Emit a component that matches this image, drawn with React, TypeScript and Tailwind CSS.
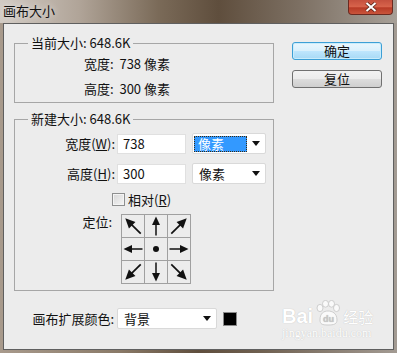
import React from "react";

const ARROWS: (number | null)[] = [-45, 0, 45, -90, null, 90, -135, 180, 135];

function Arrow({ angle }: { angle: number | null }) {
  const diag = angle !== null && angle % 90 !== 0;
  return (
    <svg width="22" height="22" viewBox="0 0 22 22">
      {angle === null ? (
        <circle cx="11" cy="11" r="3" fill="#111" />
      ) : (
        <g transform={`rotate(${angle} 11 11)${diag ? " translate(11 11) scale(1.15) translate(-11 -11)" : ""}`}>
          <line x1="11" y1="20.5" x2="11" y2="8" stroke="#111" strokeWidth="1.5" />
          <polygon points="7,10 15,10 11,1.5" fill="#111" />
        </g>
      )}
    </svg>
  );
}

function Caret() {
  return (
    <svg width="8" height="5" viewBox="0 0 8 5">
      <polygon points="0,0 8,0 4,5" fill="#111" />
    </svg>
  );
}

function Select({ value, className, active }: { value: string; className: string; active?: boolean }) {
  return (
    <div
      className={`flex h-[21px] items-center justify-between rounded-[2px] border border-[#d9d9d9] bg-white pr-[5px] ${className}`}
    >
      {active ? (
        <span className="ml-[1px] flex h-[16px] w-[53px] items-center border border-dotted border-[#3a2a10] bg-[#3399ff] pl-[3px] text-white">
          {value}
        </span>
      ) : (
        <span className="pl-[6px]">{value}</span>
      )}
      <Caret />
    </div>
  );
}

function Button({ label, focused }: { label: string; focused?: boolean }) {
  return (
    <div
      className={
        focused
          ? "flex h-[18px] w-[90px] items-center justify-center rounded-[3px] border border-[#3c9fd6] bg-[linear-gradient(#eaf6fd,#d9f0fc_50%,#bee6fd_51%,#a7d9f5)] shadow-[inset_0_0_0_1px_#c9ecfb]"
          : "flex h-[18px] w-[90px] items-center justify-center rounded-[3px] border border-[#707070] bg-[linear-gradient(#f2f2f2,#ebebeb_50%,#dddddd_51%,#cfcfcf)]"
      }
    >
      {label}
    </div>
  );
}

export default function App() {
  return (
    <div className="flex h-[353px] w-[397px] flex-col bg-[linear-gradient(90deg,#a89a8c,#8a7a68_30%,#5f4e3d_50%,#6e5f4f_65%,#a39b93_100%)] font-[family-name:Noto_Sans_CJK_SC,sans-serif] text-[13px] leading-[16px] text-[#111]">
      <div className="flex h-[23px] items-start justify-between bg-[linear-gradient(90deg,#d2cbc4,#b0a498_20%,#7a6a58_40%,#5f4e3d_55%,#7c6f62_75%,#a7a098_100%)]">
        <span className="pl-[3px] pt-[3px] text-[13px] [text-shadow:0_0_6px_#eee]">画布大小</span>
        <div className="mr-[4px] flex h-[15px] w-[45px] items-center justify-center rounded-b-[4px] border border-t-0 border-[#6b2a20] bg-[linear-gradient(#c4503e,#d8644c_50%,#b73a26_55%,#c9553c)]">
          <svg width="12" height="10" viewBox="0 0 12 10">
            <path d="M1.5 1 L10.5 9 M10.5 1 L1.5 9" stroke="#5a2418" strokeWidth="3.6" />
            <path d="M1.5 1 L10.5 9 M10.5 1 L1.5 9" stroke="#fff" strokeWidth="2" />
          </svg>
        </div>
      </div>

      <div className="relative mx-[3px] flex h-[327px] border border-[#5f5f5f] bg-[#ececec]">
        <div className="w-[270px] pl-[10px] pt-[11px]">
          <fieldset className="w-[260px] border border-[#a6a6a6] pb-[1px] pl-[13px]">
            <legend className="px-[3px]">当前大小: 648.6K</legend>
            <div className="pl-[56px]">
              <div className="flex h-[25px] items-center">宽度:&nbsp; 738 像素</div>
              <div className="flex h-[25px] items-center">高度:&nbsp; 300 像素</div>
            </div>
          </fieldset>

          <fieldset className="mt-[8px] w-[260px] border border-[#a6a6a6] pb-[6px] pl-[13px]">
            <legend className="px-[3px]">新建大小: 648.6K</legend>
            <div className="mt-[6px] flex h-[21px] items-center">
              <span className="w-[87px] text-right">
                宽度(<u>W</u>):
              </span>
              <div className="ml-[2px] flex h-[20px] w-[69px] items-center border border-[#e0e0e0] bg-white pl-[5px]">
                738
              </div>
              <Select className="ml-[6px] w-[74px]" value="像素" active />
            </div>
            <div className="mt-[9px] flex h-[21px] items-center">
              <span className="w-[87px] text-right">
                高度(<u>H</u>):
              </span>
              <div className="ml-[2px] flex h-[20px] w-[69px] items-center border border-[#e0e0e0] bg-white pl-[5px]">
                300
              </div>
              <Select className="ml-[6px] w-[74px]" value="像素" />
            </div>
            <div className="mt-[9px] flex h-[13px] items-center pl-[84px]">
              <div className="h-[13px] w-[13px] border border-[#8e8f8f] bg-[linear-gradient(135deg,#d6d6d6,#f6f6f6)] shadow-[inset_0_0_0_1px_#f4f4f4]" />
              <span className="ml-[3px]">
                相对(<u>R</u>)
              </span>
            </div>
            <div className="mt-[8px] flex items-start">
              <span className="w-[84px] text-right">定位:</span>
              <div className="ml-[9px] grid grid-cols-[22px_22px_22px] gap-px border border-[#a0a0a0] bg-[#a0a0a0]">
                {ARROWS.map((a, i) => (
                  <div key={i} className="h-[22px] w-[22px] bg-[#ececec]">
                    <Arrow angle={a} />
                  </div>
                ))}
              </div>
            </div>
          </fieldset>

          <div className="mt-[17px] flex h-[21px] items-center">
            <span className="w-[100px] text-right">画布扩展颜色:</span>
            <Select className="ml-[3px] w-[100px]" value="背景" />
            <div className="ml-[6px] h-[14px] w-[14px] border border-[#8a8a8a] bg-black" />
          </div>
        </div>

        <div className="ml-[18px] flex flex-col pt-[18px]">
          <Button label="确定" focused />
          <div className="mt-[10px]">
            <Button label="复位" />
          </div>
        </div>

        <div className="absolute left-[278px] top-[276px] flex flex-col items-start text-white [text-shadow:0_0_1px_#b5b5b5]">
          <div className="flex items-end">
            <span className="font-[family-name:Liberation_Sans,sans-serif] text-[20px] font-bold leading-[19px]">Bai</span>
            <svg width="28" height="26" viewBox="0 0 28 26" className="mx-[1px]">
              <g fill="#fafafa" stroke="#c4c4c4" strokeWidth="0.8">
                <ellipse cx="6" cy="8" rx="3" ry="3.6" />
                <ellipse cx="11.5" cy="3.8" rx="3" ry="3.4" />
                <ellipse cx="17.5" cy="3.8" rx="3" ry="3.4" />
                <ellipse cx="22.5" cy="8" rx="3" ry="3.6" />
                <path d="M6 20 C6 13 10 11 14 11 C18 11 23 13 23 20 C23 24 20 25 14 25 C8 25 6 24 6 20 Z" />
              </g>
              <text x="14.5" y="22" textAnchor="middle" fontSize="9" fontWeight="bold" fill="#c8c8c8" fontFamily="Liberation Sans, sans-serif">du</text>
            </svg>
            <span className="text-[15px] leading-[18px]">经验</span>
          </div>
          <span className="mt-[1px] font-[family-name:Liberation_Serif,serif] text-[12px] leading-[12px]">jingyan.baidu.com</span>
        </div>
      </div>
    </div>
  );
}
